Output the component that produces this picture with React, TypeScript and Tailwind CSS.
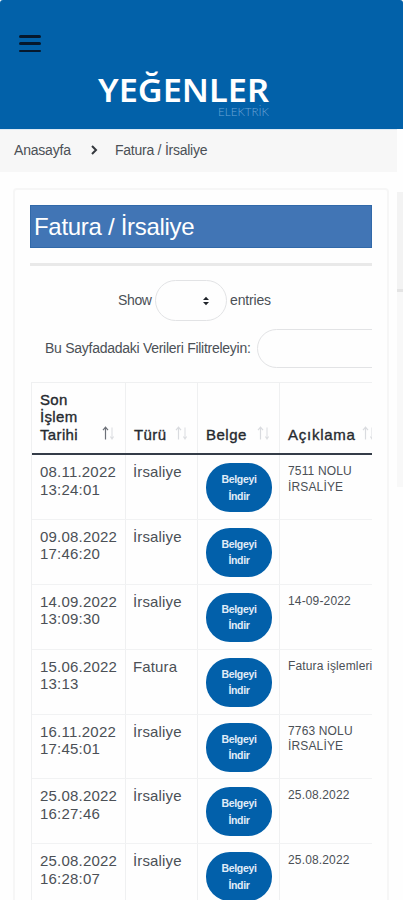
import React from "react";

type Row = { date: string; time: string; type: string; note: string[] };

const rows: Row[] = [
  { date: "08.11.2022", time: "13:24:01", type: "İrsaliye", note: ["7511 NOLU", "İRSALİYE"] },
  { date: "09.08.2022", time: "17:46:20", type: "İrsaliye", note: [] },
  { date: "14.09.2022", time: "13:09:30", type: "İrsaliye", note: ["14-09-2022"] },
  { date: "15.06.2022", time: "13:13", type: "Fatura", note: ["Fatura işlemleri"] },
  { date: "16.11.2022", time: "17:45:01", type: "İrsaliye", note: ["7763 NOLU", "İRSALİYE"] },
  { date: "25.08.2022", time: "16:27:46", type: "İrsaliye", note: ["25.08.2022"] },
  { date: "25.08.2022", time: "16:28:07", type: "İrsaliye", note: ["25.08.2022"] },
];

const columns = "grid w-[360px] grid-cols-[94px_72px_82px_112px]";

function SortArrows({ active = false }: { active?: boolean }) {
  return (
    <svg width="13" height="16" viewBox="0 0 13 16" fill="none" className="mb-[2px] shrink-0">
      <path d="M3.5 14.5V2.5M1 5.2L3.5 2.2L6 5.2" stroke={active ? "#6c7078" : "#d9dbdf"} strokeWidth="1.2" />
      <path d="M10 2.5V13.5M8.3 11.5L10 14L11.7 11.5" stroke="#dddfe2" strokeWidth="1.1" />
    </svg>
  );
}

function Logo() {
  return (
    <svg width="180" height="60" viewBox="0 0 180 60" className="block">
      <text x="5" y="35.5" textLength="171" lengthAdjust="spacingAndGlyphs" fill="#fff" fontFamily="'Noto Sans', sans-serif" fontSize="31.5" fontWeight="600">
        YEĞENLER
      </text>
      <text x="125" y="50" textLength="51" lengthAdjust="spacingAndGlyphs" fill="#6ba4d6" fontFamily="Lato, sans-serif" fontSize="12" fontWeight="300">
        ELEKTRİK
      </text>
    </svg>
  );
}

export default function App() {
  return (
    <div className="h-[900px] w-[403px] overflow-hidden bg-[#fefefe] font-['Liberation_Sans',Arial,sans-serif] text-[#4b5056]">
      <header className="h-[129px] rounded-t-[3px] bg-[#0261a9] pt-[35px]">
        <button className="ml-[19px] flex h-[17px] w-[22px] flex-col justify-between" aria-label="Menu">
          <span className="h-[2.5px] w-full rounded-full bg-[#06182d]" />
          <span className="h-[2.5px] w-full rounded-full bg-[#06182d]" />
          <span className="h-[2.5px] w-full rounded-full bg-[#06182d]" />
        </button>
        <div className="ml-[93px] mt-[14px]">
          <Logo />
        </div>
      </header>

      <nav className="flex h-[43px] w-[397px] items-center border-t border-[#dceaf5] bg-[#f7f7f7] pb-[2px] pl-[14px] text-[14px]">
        <span className="w-[76px] -tracking-[0.2px]">Anasayfa</span>
        <svg width="8" height="10" viewBox="0 0 8 10" fill="none" className="mr-[17px]">
          <path d="M2 1L6 5L2 9" stroke="#34383d" strokeWidth="2" />
        </svg>
        <span className="-tracking-[0.25px]">Fatura / İrsaliye</span>
      </nav>

      <div className="flex h-[728px] items-start justify-between">
        <main className="ml-[13px] mt-[16px] h-[730px] w-[376px] rounded-t-[4px] border-2 border-[#f6f6f6] bg-[#fefefe] pl-[15px] pt-[15px]">
          <div className="w-[342px] overflow-hidden">
            <h1 className="h-[43px] border border-[#3169a9] bg-[#4175b5] pl-[3px] text-[24px] leading-[42px] -tracking-[0.3px] text-white">
              Fatura / İrsaliye
            </h1>
            <div className="mt-[15px] h-[3px] bg-[#e9e9e9]" />

            <div className="mt-[14px] flex h-[41px] items-center pl-[88px] text-[14px]">
              <span className="w-[37px] -tracking-[0.35px]">Show</span>
              <span className="flex h-[41px] w-[72px] items-center justify-end rounded-full border border-[#e2e3e5] pr-[16px]">
                <svg width="8" height="10" viewBox="0 0 8 10" fill="#20242a">
                  <path d="M1 4L4 0.7L7 4ZM1 6L4 9.3L7 6Z" />
                </svg>
              </span>
              <span className="ml-[3px] -tracking-[0.15px]">entries</span>
            </div>

            <div className="mt-[8px] flex h-[39px] w-[420px] items-center pl-[15px] text-[14px]">
              <span className="w-[212px] shrink-0 whitespace-nowrap -tracking-[0.27px]">Bu Sayfadadaki Verileri Filitreleyin:</span>
              <span className="h-[39px] w-[190px] shrink-0 rounded-full border border-[#e2e3e5]" />
            </div>

            <div className="ml-[1px] mt-[14px] w-[360px] border-l border-t border-[#eff0f1]">
              <div className={`${columns} h-[72px] border-b-2 border-[#343c48] text-[15px] font-normal leading-[17.5px] text-[#262a2f] [-webkit-text-stroke:0.35px_#262a2f]`}>
                <div className="flex items-end justify-between border-r border-[#eff0f1] pb-[10px] pl-[8px] pr-[10px]">
                  <span className="tracking-[0.35px]">
                    Son
                    <br />
                    İşlem
                    <br />
                    Tarihi
                  </span>
                  <SortArrows active />
                </div>
                <div className="flex items-end justify-between border-r border-[#eff0f1] pb-[10px] pl-[8px] pr-[9px]">
                  <span className="tracking-[0.4px]">Türü</span>
                  <SortArrows />
                </div>
                <div className="flex items-end justify-between border-r border-[#eff0f1] pb-[10px] pl-[8px] pr-[9px]">
                  <span className="tracking-[0.5px]">Belge</span>
                  <SortArrows />
                </div>
                <div className="flex items-end pb-[10px] pl-[8px]">
                  <span className="w-[74px] tracking-[0.75px]">Açıklama</span>
                  <SortArrows />
                </div>
              </div>

              {rows.map((row, i) => (
                <div key={i} className={`${columns} h-[64.9px] border-b border-[#f1f2f3] text-[15px] leading-[17.5px]`}>
                  <div className="border-r border-[#eff0f1] pl-[8px] pt-[8px] tracking-[0.2px]">
                    {row.date}
                    <br />
                    {row.time}
                  </div>
                  <div className="border-r border-[#eff0f1] pl-[7px] pt-[8px] tracking-[0.15px]">{row.type}</div>
                  <div className="border-r border-[#eff0f1] pl-[8px] pt-[8px]">
                    <button className="h-[49px] w-[66px] rounded-[24px] bg-[#0260aa] text-[10.5px] font-bold leading-[16.5px] -tracking-[0.3px] text-[#e1edf8]">
                      Belgeyi
                      <br />
                      İndir
                    </button>
                  </div>
                  <div className="whitespace-nowrap pl-[8px] pt-[9px] text-[12px] leading-[15.5px] tracking-[0.15px]">
                    {row.note.map((line) => (
                      <div key={line}>{line}</div>
                    ))}
                  </div>
                </div>
              ))}
            </div>
          </div>
        </main>

        <aside className="mt-[20px] flex w-[6px] flex-col">
          <div className="h-[97px] bg-[#f3f3f3]" />
          <div className="h-[3px] bg-[#e4e4e4]" />
          <div className="h-[195px] bg-[#f8f8f8]" />
        </aside>
      </div>
    </div>
  );
}
